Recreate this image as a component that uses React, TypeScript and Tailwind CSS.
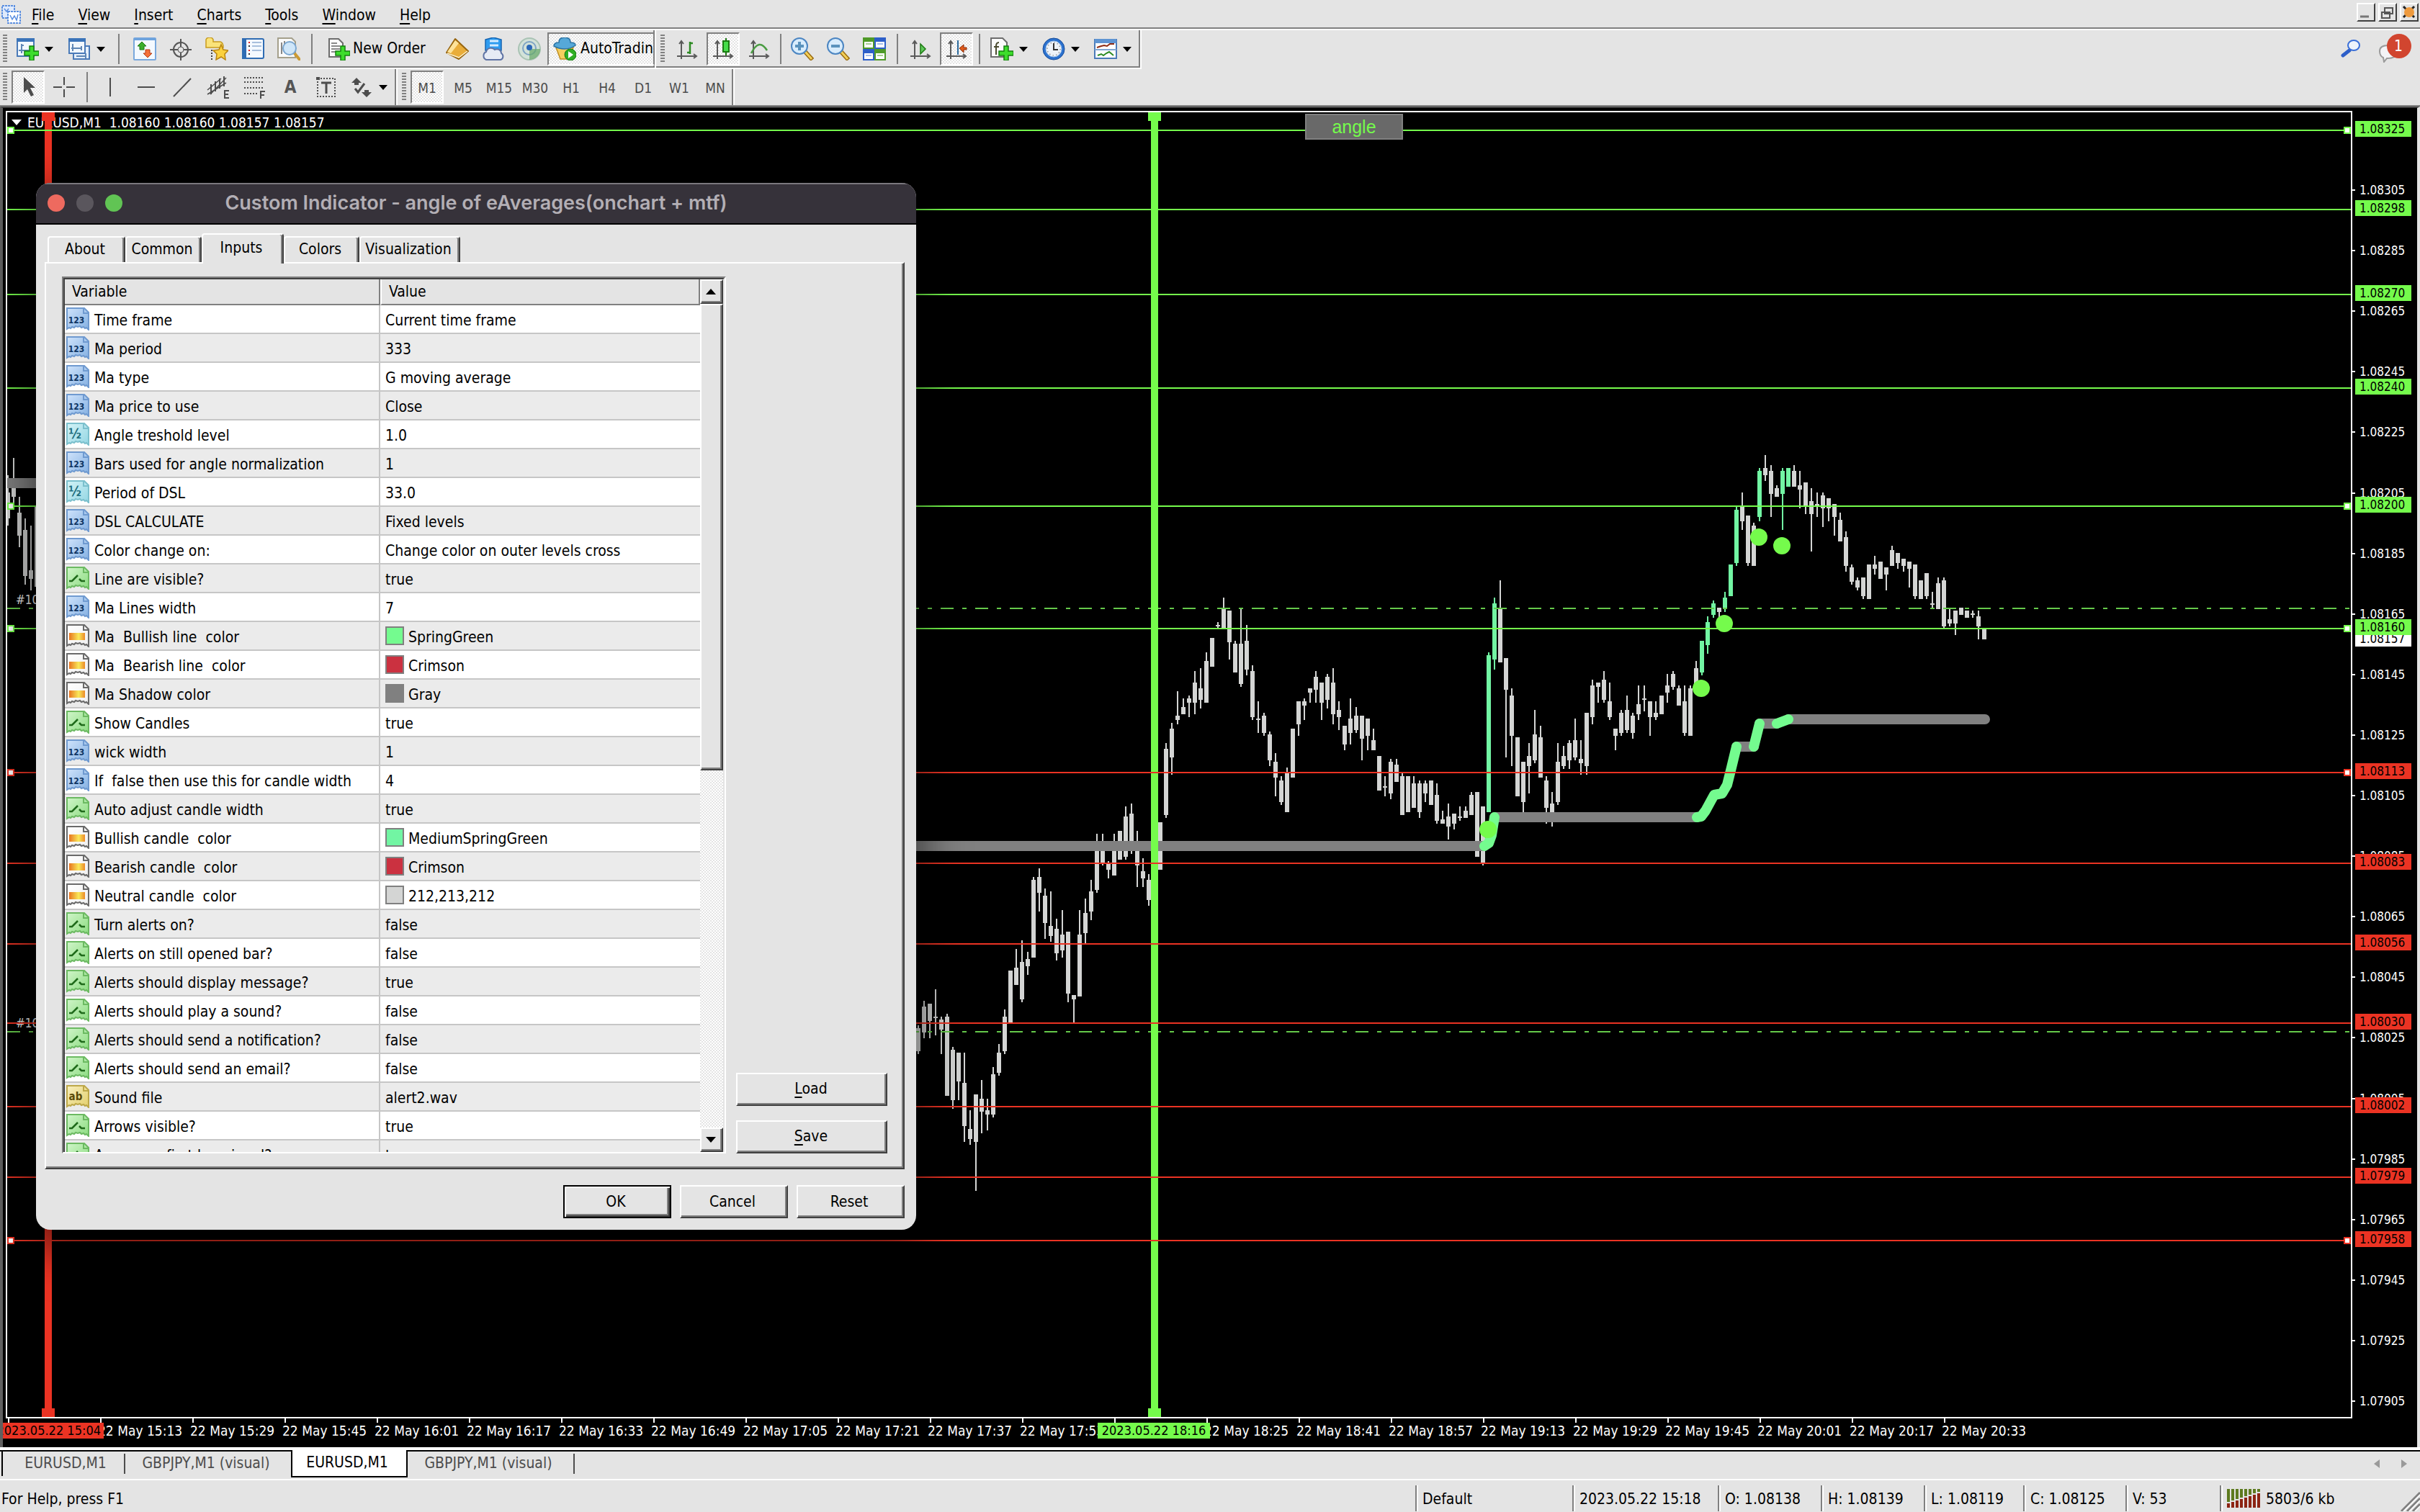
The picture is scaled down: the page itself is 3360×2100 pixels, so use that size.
import type { ReactNode } from "react";

/* ------------------------------------------------------------------ data */

type Kind = "int" | "num" | "bool" | "color" | "text";
type Input = { kind: Kind; name: string; value: string; swatch?: string };

const INPUTS: Input[] = [
  { kind: "int", name: "Time frame", value: "Current time frame" },
  { kind: "int", name: "Ma period", value: "333" },
  { kind: "int", name: "Ma type", value: "G moving average" },
  { kind: "int", name: "Ma price to use", value: "Close" },
  { kind: "num", name: "Angle treshold level", value: "1.0" },
  { kind: "int", name: "Bars used for angle normalization", value: "1" },
  { kind: "num", name: "Period of DSL", value: "33.0" },
  { kind: "int", name: "DSL CALCULATE", value: "Fixed levels" },
  { kind: "int", name: "Color change on:", value: "Change color on outer levels cross" },
  { kind: "bool", name: "Line are visible?", value: "true" },
  { kind: "int", name: "Ma Lines width", value: "7" },
  { kind: "color", name: "Ma  Bullish line  color", value: "SpringGreen", swatch: "bg-[#74fb8f]" },
  { kind: "color", name: "Ma  Bearish line  color", value: "Crimson", swatch: "bg-[#cb3140]" },
  { kind: "color", name: "Ma Shadow color", value: "Gray", swatch: "bg-[#808080]" },
  { kind: "bool", name: "Show Candles", value: "true" },
  { kind: "int", name: "wick width", value: "1" },
  { kind: "int", name: "If  false then use this for candle width", value: "4" },
  { kind: "bool", name: "Auto adjust candle width", value: "true" },
  { kind: "color", name: "Bullish candle  color", value: "MediumSpringGreen", swatch: "bg-[#72f5a3]" },
  { kind: "color", name: "Bearish candle  color", value: "Crimson", swatch: "bg-[#cb3140]" },
  { kind: "color", name: "Neutral candle  color", value: "212,213,212", swatch: "bg-[#d4d5d4]" },
  { kind: "bool", name: "Turn alerts on?", value: "false" },
  { kind: "bool", name: "Alerts on still opened bar?", value: "false" },
  { kind: "bool", name: "Alerts should display message?", value: "true" },
  { kind: "bool", name: "Alerts should play a sound?", value: "false" },
  { kind: "bool", name: "Alerts should send a notification?", value: "false" },
  { kind: "bool", name: "Alerts should send an email?", value: "false" },
  { kind: "text", name: "Sound file", value: "alert2.wav" },
  { kind: "bool", name: "Arrows visible?", value: "true" },
  { kind: "bool", name: "Arrows on first bar signal?", value: "true" },
];

/* Plot coordinates: x 10..3264, y 156..1968 */
const PLOT = { x: 10, y: 156, w: 3254, h: 1812 };

const LEVELS = [
  { p: "1.08325", y: 181, up: true, grip: true },
  { p: "1.08298", y: 291, up: true, grip: false },
  { p: "1.08270", y: 409, up: true, grip: false },
  { p: "1.08240", y: 539, up: true, grip: false },
  { p: "1.08200", y: 703, up: true, grip: true },
  { p: "1.08160", y: 873, up: true, grip: true },
  { p: "1.08113", y: 1073, up: false, grip: true },
  { p: "1.08083", y: 1199, up: false, grip: false },
  { p: "1.08056", y: 1311, up: false, grip: false },
  { p: "1.08030", y: 1421, up: false, grip: false },
  { p: "1.08002", y: 1537, up: false, grip: false },
  { p: "1.07979", y: 1635, up: false, grip: false },
  { p: "1.07958", y: 1723, up: false, grip: true },
];

const SCALE = Array.from({ length: 21 }, (_, i) => ({
  p: (1.08305 - i * 0.0002).toFixed(5),
  y: 264 + i * 84.1,
}));

const TIMES = Array.from({ length: 22 }, (_, i) => {
  const m = 14 * 60 + 57 + i * 16;
  return {
    x: 11 + i * 128,
    label: `22 May ${Math.floor(m / 60)}:${String(m % 60).padStart(2, "0")}`,
  };
});

/* high, body top, body bottom, low; one entry per 8px bar */
type Bar = [number, number, number, number];
const EARLY: Bar[] = [
  [660, 684, 720, 730], [636, 664, 690, 704], [690, 712, 744, 760],
  [720, 736, 800, 812], [730, 792, 804, 820], [702, 702, 815, 815],
];
const BARS: Bar[] = [
  [1424, 1428, 1460, 1464], [1390, 1398, 1434, 1442], [1394, 1394, 1418, 1442], [1374, 1412, 1414, 1438],
  [1412, 1416, 1430, 1464], [1408, 1412, 1522, 1522], [1454, 1458, 1528, 1540], [1462, 1462, 1502, 1528],
  [1462, 1504, 1564, 1586], [1542, 1568, 1582, 1590], [1520, 1520, 1586, 1654], [1500, 1526, 1544, 1574],
  [1526, 1542, 1548, 1570], [1482, 1492, 1548, 1552], [1450, 1462, 1490, 1494], [1402, 1412, 1460, 1464],
  [1348, 1348, 1420, 1420], [1318, 1344, 1368, 1368], [1306, 1336, 1388, 1392], [1322, 1332, 1342, 1354],
  [1218, 1222, 1330, 1330], [1206, 1218, 1240, 1266], [1234, 1244, 1282, 1304], [1238, 1286, 1300, 1308],
  [1276, 1290, 1324, 1334], [1264, 1298, 1320, 1330], [1294, 1294, 1380, 1392], [1382, 1382, 1388, 1420],
  [1264, 1298, 1384, 1384], [1248, 1268, 1296, 1310], [1222, 1238, 1266, 1278], [1158, 1176, 1236, 1240],
  [1158, 1176, 1198, 1202], [1196, 1200, 1208, 1220], [1158, 1168, 1216, 1216], [1154, 1154, 1194, 1194],
  [1120, 1134, 1190, 1194], [1116, 1130, 1172, 1186], [1154, 1176, 1202, 1232], [1192, 1210, 1220, 1232],
  [1214, 1222, 1250, 1258], [1190, 1200, 1230, 1240], [1142, 1142, 1208, 1208], [1032, 1040, 1132, 1136],
  [1004, 1012, 1052, 1076], [960, 994, 1000, 1006], [970, 982, 992, 992], [966, 970, 976, 996],
  [932, 948, 976, 992], [928, 956, 972, 984], [906, 918, 976, 976], [886, 886, 926, 926],
  [864, 868, 870, 872], [830, 844, 872, 872], [848, 848, 892, 916], [890, 894, 934, 934],
  [844, 894, 950, 954], [868, 890, 930, 938], [924, 932, 996, 1000], [974, 998, 1000, 1018],
  [990, 994, 1018, 1022], [1016, 1020, 1056, 1064], [1046, 1058, 1080, 1106], [1078, 1084, 1114, 1118],
  [1066, 1074, 1128, 1128], [1012, 1012, 1080, 1080], [974, 974, 1006, 1022], [970, 974, 980, 1000],
  [956, 956, 962, 976], [932, 940, 958, 976], [948, 948, 976, 1000], [936, 940, 972, 984],
  [928, 948, 992, 1006], [974, 986, 996, 1014], [1008, 1008, 1034, 1042], [970, 998, 1018, 1034],
  [982, 994, 1014, 1018], [994, 994, 1026, 1056], [998, 998, 1022, 1042], [1012, 1028, 1042, 1042],
  [1050, 1050, 1098, 1098], [1078, 1092, 1094, 1106], [1054, 1058, 1102, 1110], [1054, 1062, 1086, 1086],
  [1074, 1078, 1132, 1132], [1078, 1078, 1128, 1128], [1078, 1088, 1122, 1122], [1084, 1088, 1128, 1136],
  [1084, 1088, 1102, 1114], [1084, 1084, 1118, 1118], [1088, 1104, 1140, 1144], [1126, 1138, 1144, 1144],
  [1116, 1134, 1148, 1166], [1130, 1130, 1144, 1152], [1120, 1134, 1136, 1140], [1120, 1126, 1136, 1136],
  [1100, 1104, 1132, 1132], [1100, 1100, 1190, 1190], [1120, 1120, 1200, 1202], [906, 910, 1128, 1128],
  [830, 838, 916, 930], [806, 844, 920, 920], [914, 914, 958, 1052], [956, 966, 1022, 1064],
  [1024, 1024, 1106, 1106], [1058, 1058, 1114, 1128], [1032, 1050, 1064, 1102], [986, 1020, 1056, 1060],
  [1008, 1024, 1080, 1080], [1078, 1084, 1122, 1144], [1100, 1116, 1130, 1148], [1032, 1058, 1114, 1118],
  [1036, 1050, 1064, 1068], [1028, 1032, 1056, 1068], [998, 1028, 1052, 1056], [1028, 1054, 1060, 1076],
  [990, 990, 1064, 1076], [944, 952, 996, 1006], [948, 948, 954, 976], [932, 944, 972, 976],
  [948, 974, 996, 1000], [1012, 1012, 1022, 1042], [986, 990, 1018, 1022], [966, 986, 1014, 1018],
  [990, 994, 1018, 1026], [952, 978, 992, 1000], [952, 970, 972, 988], [974, 974, 996, 1022],
  [974, 990, 996, 1000], [966, 966, 992, 992], [936, 952, 962, 976], [932, 936, 954, 958],
  [952, 956, 980, 980], [952, 974, 1018, 1022], [952, 956, 1022, 1022], [918, 928, 956, 956],
  [890, 890, 934, 938], [856, 864, 896, 908], [834, 838, 854, 858], [844, 844, 850, 858],
  [822, 830, 846, 850], [784, 784, 828, 828], [704, 708, 782, 786], [684, 704, 724, 736],
  [716, 716, 782, 786], [726, 730, 786, 786], [650, 654, 718, 724], [632, 650, 660, 668],
  [646, 654, 686, 718], [674, 678, 690, 690], [650, 654, 686, 736], [650, 650, 676, 676],
  [646, 654, 676, 676], [654, 674, 680, 706], [670, 670, 704, 714], [678, 696, 714, 766],
  [684, 700, 702, 718], [684, 688, 706, 732], [692, 692, 706, 724], [700, 700, 718, 744],
  [712, 722, 752, 752], [738, 746, 786, 794], [784, 788, 808, 812], [802, 806, 816, 820],
  [802, 802, 828, 832], [784, 784, 832, 832], [772, 784, 790, 798], [780, 780, 804, 804],
  [788, 788, 798, 820], [758, 764, 786, 786], [768, 768, 782, 790], [776, 776, 786, 794],
  [780, 780, 790, 816], [784, 784, 828, 832], [806, 806, 832, 832], [796, 796, 828, 832],
  [822, 838, 840, 846], [802, 810, 846, 846], [802, 806, 870, 872], [844, 860, 866, 870],
  [848, 848, 866, 882], [844, 844, 854, 854], [848, 848, 858, 858], [848, 852, 854, 858],
  [848, 856, 870, 888], [872, 872, 888, 888],
];
const FIRST_X = 1275;
const GREEN_X = [2067, 2075, 2363, 2371, 2379, 2395, 2403, 2411, 2443, 2475, 2483];
const SIGNALS: [number, number][] = [[2066, 1152], [2362, 956], [2394, 866], [2442, 746], [2474, 758]];

/* ----------------------------------------------------------------- icons */

function Svg({ children }: { children: ReactNode }) {
  return (
    <svg viewBox="0 0 32 32" className="size-8 shrink-0" aria-hidden="true">
      {children}
    </svg>
  );
}

const Plus = () => (
  <path d="M19 12h6v7h7v6h-7v7h-6v-7h-7v-6h7z" fill="#3ddc2c" stroke="#15800f" strokeWidth="1.5" />
);
const Axes = () => (
  <path d="M8 6v24M2 26h26M5 9l3-4 3 4M25 23l4 3-4 3" fill="none" stroke="#5a5a5a" strokeWidth="2" />
);

const NewChartIcon = () => (
  <Svg>
    <rect x="2" y="2" width="23" height="24" fill="#f2f8fe" stroke="#4a7ab8" strokeWidth="2" />
    <rect x="1" y="1" width="25" height="5" fill="#3b74b9" />
    <path d="M8 9v13M4 18h14M8 11h3" stroke="#5f87b5" strokeWidth="2" />
    <Plus />
  </Svg>
);
const ProfilesIcon = () => (
  <Svg>
    <rect x="8" y="12" width="22" height="18" fill="#e5effa" stroke="#4a7ab8" strokeWidth="2" />
    <path d="M12 26h14M25 22v7" stroke="#5f87b5" strokeWidth="2" />
    <rect x="2" y="2" width="22" height="20" fill="#f2f8fe" stroke="#4a7ab8" strokeWidth="2" />
    <rect x="1" y="1" width="24" height="5" fill="#3b74b9" />
    <path d="M7 9v10M5 15h14M19 12v6" stroke="#5f87b5" strokeWidth="2" />
  </Svg>
);
const MarketIcon = () => (
  <Svg>
    <rect x="1" y="1" width="30" height="30" rx="1" fill="#f4f9ff" stroke="#79a8dd" strokeWidth="2" />
    <rect x="1" y="1" width="30" height="3" fill="#6ea3de" />
    <path d="M12 6l6 6h-3v5H9v-5H6z" fill="#3cae2c" stroke="#1c7a12" />
    <path d="M20 28l-6-6h3v-5h6v5h3z" fill="#f4713a" stroke="#b73b12" />
  </Svg>
);
const TargetIcon = () => (
  <Svg>
    <g fill="none" stroke="#555" strokeWidth="2">
      <circle cx="16" cy="17" r="10" />
      <circle cx="16" cy="17" r="4" strokeWidth="1" />
      <path d="M16 2v11M16 21v11M1 17h11M20 17h11" />
    </g>
  </Svg>
);
const NavigatorIcon = () => (
  <Svg>
    <path d="M1 14V3q1-3 5-3t5 3v3h10q4 1 4 8z" fill="#fae37a" stroke="#c79b1e" strokeWidth="1.5" />
    <path d="M9 17v15" stroke="#444" strokeWidth="2" strokeDasharray="2 2" />
    <path d="M22 10l3 7 7 1-5 5 1 8-6-4-7 4 1-8-5-5 8-1z" fill="#fbd13d" stroke="#b98410" strokeWidth="1.5" />
  </Svg>
);
const DataIcon = () => (
  <Svg>
    <rect x="2" y="2" width="29" height="27" rx="2" fill="#f4f9ff" stroke="#2f6cb3" strokeWidth="2" />
    <rect x="1" y="1" width="6" height="29" fill="#2f6cb3" />
    <path d="M10 7h2M10 18h2" stroke="#e02020" strokeWidth="2" />
    <path d="M10 12h2M10 23h2" stroke="#333" strokeWidth="2" />
    <path d="M15 7h13M15 12h13M15 18h13" stroke="#a8bfdc" strokeWidth="2" />
  </Svg>
);
const TesterIcon = () => (
  <Svg>
    <path d="M1 1h19l5 5v22H1z" fill="#fafafa" stroke="#a5a08c" strokeWidth="2" />
    <path d="M6 7v16M10 5v8" stroke="#888" strokeWidth="2" />
    <path d="M23 21l9 11" stroke="#cc9a33" strokeWidth="4" />
    <circle cx="17" cy="15" r="9" fill="#cfe6f9" stroke="#7aa6d0" strokeWidth="2" />
  </Svg>
);
const OrderIcon = () => (
  <Svg>
    <path d="M3 2h13l6 6v19H3z" fill="#fbfbfb" stroke="#6d6d6d" strokeWidth="2" />
    <path d="M6 8h8M6 12h12M6 16h12M6 20h6" stroke="#8a8a8a" strokeWidth="2" />
    <Plus />
  </Svg>
);
const BookIcon = () => (
  <Svg>
    <path d="M13 2l18 17-13 11L1 21z" fill="#e9ad3a" stroke="#97650f" strokeWidth="2" strokeLinejoin="round" />
    <path d="M13 4L2 20l5 2L18 8z" fill="#fde39a" />
    <path d="M2 22l16 6 12-9" fill="none" stroke="#fff3cf" strokeWidth="1.5" />
  </Svg>
);
const CloudIcon = () => (
  <Svg>
    <path d="M5 3l11-3 11 3v15H5z" fill="#2f9cf0" stroke="#1463b0" strokeWidth="1.5" />
    <path d="M11 5h12M11 11h12" stroke="#d5ecff" strokeWidth="3" />
    <path d="M6 31a6 6 0 010-11 7 7 0 0112-3 6 6 0 019 5 5 5 0 01-1 9z" fill="#e6ebf5" stroke="#5f73a4" strokeWidth="2" />
  </Svg>
);
const SignalIcon = () => (
  <Svg>
    <circle cx="16" cy="16" r="15" fill="#d3e2d9" stroke="#a9c3b4" strokeWidth="2" />
    <circle cx="16" cy="15" r="9" fill="none" stroke="#7ea4c4" strokeWidth="2" />
    <path d="M16 16h15a15 15 0 01-15 15z" fill="#66a866" opacity=".7" />
    <circle cx="16" cy="14" r="4" fill="#2a68b8" />
  </Svg>
);
const AutoIcon = () => (
  <Svg>
    <path d="M4 14l6 16h12l6-16z" fill="#f6cf5f" stroke="#c18f22" strokeWidth="1.5" />
    <path d="M1 12q0-5 7-5 0-7 8-7t8 7q7 0 7 4-7 5-15 5T1 12z" fill="#56a8d8" stroke="#2a72a3" strokeWidth="1.5" />
    <circle cx="24" cy="24" r="8" fill="#2fae24" stroke="#17790f" />
    <path d="M21 19l7 5-7 5z" fill="#fff" />
  </Svg>
);
const BarsIcon = () => (
  <Svg>
    <Axes />
    <path d="M20 6v17M20 8h4M16 21h4" stroke="#2c8a22" strokeWidth="2.5" />
  </Svg>
);
const CandlesIcon = () => (
  <Svg>
    <Axes />
    <path d="M20 1v24" stroke="#1c7a12" strokeWidth="2" />
    <rect x="16" y="5" width="8" height="15" fill="#46dd4a" stroke="#1c7a12" strokeWidth="2" />
  </Svg>
);
const LineIcon = () => (
  <Svg>
    <Axes />
    <path d="M5 22Q16 0 27 18" fill="none" stroke="#4a9c42" strokeWidth="2.5" />
  </Svg>
);
const ZoomIcon = ({ plus }: { plus?: boolean }) => (
  <Svg>
    <path d="M20 20l10 11" stroke="#9a6c12" strokeWidth="6" />
    <path d="M20 20l9 10" stroke="#f3cf57" strokeWidth="3" />
    <circle cx="12" cy="12" r="11" fill="#d8ecfc" stroke="#4c86c2" strokeWidth="2" />
    <path d={plus ? "M6 12h12M12 6v12" : "M6 12h12"} stroke="#5b93bd" strokeWidth="4" />
  </Svg>
);
const TileIcon = () => (
  <Svg>
    <path d="M0 0h16v16H0zM16 16h16v16H16z" fill="#4f9a28" />
    <path d="M16 0h16v16H16zM0 16h16v16H0z" fill="#2d5fc9" />
    <path d="M2 6h12v8H2zM18 6h12v8H18zM2 22h12v8H2zM18 22h12v8H18z" fill="#fff" />
    <path d="M4 9h8M20 25h8" stroke="#a9cf95" strokeWidth="2" />
    <path d="M20 9h8M4 25h8" stroke="#a7bfec" strokeWidth="2" />
  </Svg>
);
const ScrollIcon = () => (
  <Svg>
    <Axes />
    <path d="M16 9l7 7-7 7z" fill="#5fc85a" stroke="#1c7a12" strokeWidth="1.5" />
  </Svg>
);
const ShiftIcon = () => (
  <Svg>
    <Axes />
    <path d="M18 4v20" stroke="#2c6a9c" strokeWidth="2" />
    <path d="M20 15l6-5v4h4v3h-4v4z" fill="#e05a1a" stroke="#8a2b06" />
  </Svg>
);
const IndicatorIcon = () => (
  <Svg>
    <path d="M1 1h16l6 6v20H1z" fill="#fbfbfb" stroke="#6d6d6d" strokeWidth="2" />
    <path d="M12 7q-4 0-4 5v12M5 13h7" fill="none" stroke="#4b4b30" strokeWidth="2" />
    <Plus />
  </Svg>
);
const ClockIcon = () => (
  <Svg>
    <circle cx="16" cy="16" r="15" fill="#2c72cf" stroke="#164b98" />
    <circle cx="16" cy="16" r="11" fill="#eef3f9" stroke="#9bbfe8" />
    <path d="M16 8v9h6" fill="none" stroke="#333" strokeWidth="2" />
    <circle cx="16" cy="16" r="9" fill="none" stroke="#999" strokeWidth="1.5" strokeDasharray="1.5 3.2" />
  </Svg>
);
const TemplateIcon = () => (
  <Svg>
    <rect x="1" y="3" width="30" height="26" fill="#fff" stroke="#4a7ab8" strokeWidth="2" />
    <rect x="1" y="2" width="30" height="6" fill="#5e94d2" />
    <path d="M1 17h30" stroke="#7fa6d3" strokeWidth="2" />
    <path d="M4 14l6-2 4-1 4 1 4-3h6" fill="none" stroke="#8c2a12" strokeWidth="2" />
    <path d="M5 25l5-2 3 2 4-3 4-2 6 5" fill="none" stroke="#2c8a22" strokeWidth="2" />
  </Svg>
);

const CursorIcon = () => (
  <Svg>
    <path d="M10 2v22l5-5 5 10 4-2-5-10h7z" fill="#4d4d4d" />
  </Svg>
);
const CrossIcon = () => (
  <Svg>
    <path d="M16 2v11M16 19v11M1 16h12M19 16h12" stroke="#4d4d4d" strokeWidth="2" />
  </Svg>
);
const VLineIcon = () => (
  <Svg>
    <path d="M16 3v26" stroke="#4d4d4d" strokeWidth="2" />
  </Svg>
);
const HLineIcon = () => (
  <Svg>
    <path d="M4 16h24" stroke="#4d4d4d" strokeWidth="2" />
  </Svg>
);
const TrendIcon = () => (
  <Svg>
    <path d="M4 29L28 4" stroke="#4d4d4d" strokeWidth="2" />
  </Svg>
);
const ChannelIcon = () => (
  <Svg>
    <path d="M1 20L20 4M5 26L27 3M1 26L27 10" stroke="#4d4d4d" strokeWidth="1.5" />
    <path d="M6 12v14M12 8v14M18 4v14M24 1v14" stroke="#4d4d4d" strokeWidth="2" />
    <path d="M31 21h-6v10h6M25 26h5" fill="none" stroke="#4d4d4d" strokeWidth="2" />
  </Svg>
);
const FiboIcon = () => (
  <Svg>
    <path d="M2 3h28M2 9h28M2 17h28M2 25h20" stroke="#4d4d4d" strokeWidth="2" strokeDasharray="2 2" />
    <path d="M31 22h-6v10M25 27h5" fill="none" stroke="#4d4d4d" strokeWidth="2" />
  </Svg>
);
const LabelIcon = () => (
  <Svg>
    <rect x="4" y="4" width="24" height="25" fill="none" stroke="#4d4d4d" strokeWidth="2" strokeDasharray="2 2" />
    <path d="M2 2h5v4H2z" fill="#4d4d4d" />
    <path d="M9 10h14M16 10v15" stroke="#4d4d4d" strokeWidth="3" />
  </Svg>
);
const ArrowsIcon = () => (
  <Svg>
    <path d="M9 3l7 7H12v3H6v-3H2zM23 30l-7-7h4v-3h6v3h4z" fill="#4d4d4d" />
    <path d="M7 18l4 5 9-12" fill="none" stroke="#4d4d4d" strokeWidth="3" />
  </Svg>
);

const KIND_STYLE: Record<Kind, { from: string; to: string; edge: string; ink: string }> = {
  int: { from: "#cfe3fb", to: "#84b0e2", edge: "#6f9ad0", ink: "#0f3563" },
  num: { from: "#d3f3f7", to: "#93d6e3", edge: "#7cc0cd", ink: "#1d6d7d" },
  bool: { from: "#d0f5c9", to: "#8bdc80", edge: "#6cba62", ink: "#1f6a1a" },
  color: { from: "#ffffff", to: "#efefef", edge: "#6a6a6a", ink: "#333333" },
  text: { from: "#f7eebd", to: "#e3cf6c", edge: "#bda849", ink: "#5b4a08" },
};

function KindIcon({ kind }: { kind: Kind }) {
  const s = KIND_STYLE[kind];
  return (
    <Svg>
      <path
        d="M1 1h24l6 6v24l-3-3-2 1-2-2-3 1-2-2-3 1-3-1-2 2-3-1-2 2-2-1-3 2z"
        fill={`url(#kind-${kind})`}
        stroke={s.edge}
        strokeWidth="2"
      />
      <path d="M24 1v7h7" fill="none" stroke={s.edge} strokeWidth="2" />
      {kind === "int" && (
        <text x="14" y="22" textAnchor="middle" fontSize="12" fontWeight="700" fontFamily="DejaVu Sans Condensed" fill={s.ink}>
          123
        </text>
      )}
      {kind === "num" && (
        <text x="12" y="22" textAnchor="middle" fontSize="19" fontWeight="700" fontFamily="DejaVu Sans Condensed" fill={s.ink}>
          ½
        </text>
      )}
      {kind === "text" && (
        <text x="13" y="21" textAnchor="middle" fontSize="15" fontWeight="700" fontFamily="DejaVu Sans Condensed" fill={s.ink}>
          ab
        </text>
      )}
      {kind === "bool" && <path d="M4 20h4l8-8M18 17l3 3h5" fill="none" stroke={s.ink} strokeWidth="2.5" />}
      {kind === "color" && <rect x="4" y="12" width="22" height="10" fill="url(#kind-bar)" />}
    </Svg>
  );
}

function IconDefs() {
  return (
    <svg className="absolute size-0" aria-hidden="true">
      <defs>
        {(Object.keys(KIND_STYLE) as Kind[]).map((k) => (
          <linearGradient key={k} id={`kind-${k}`} x1="0" y1="0" x2="1" y2="1">
            <stop offset="0" stopColor={KIND_STYLE[k].from} />
            <stop offset="1" stopColor={KIND_STYLE[k].to} />
          </linearGradient>
        ))}
        <linearGradient id="kind-bar">
          <stop offset="0" stopColor="#e8741f" />
          <stop offset=".6" stopColor="#f9e95a" />
          <stop offset="1" stopColor="#ec8a28" />
        </linearGradient>
      </defs>
    </svg>
  );
}

/* -------------------------------------------------------------- menu bar */

const WINBTN =
  "flex size-[26px] items-center justify-center border-2 border-t-white border-l-white border-r-[#404040] border-b-[#404040]";

function MenuBar() {
  const items = [
    ["F", "ile"], ["V", "iew"], ["I", "nsert"], ["C", "harts"], ["T", "ools"], ["W", "indow"], ["H", "elp"],
  ];
  return (
    <header className="flex h-[42px] items-center border-b-2 border-white pl-0.5 shadow-[inset_0_-2px_0_#808080]">
      <svg viewBox="0 0 28 28" className="size-7 shrink-0" aria-hidden="true">
        <path d="M1 2h17v17H1z" fill="#dfeafc" stroke="#5b8fe0" strokeWidth="2" strokeDasharray="3 1" />
        <path d="M9 10h17v16H9z" fill="#fff" stroke="#5b8fe0" strokeWidth="2" strokeDasharray="3 1" />
        <path d="M12 15l3 6 3-5 3 6 2-8M4 6l3 4 3-4" fill="none" stroke="#5b8fe0" strokeWidth="1.5" />
      </svg>
      <nav className="flex h-full flex-1 items-center gap-[33px] pt-1 pl-3.5 text-[21px]">
        {items.map(([m, rest]) => (
          <button key={rest} type="button">
            <u className="underline-offset-4">{m}</u>
            {rest}
          </button>
        ))}
      </nav>
      <div className="flex items-start gap-1 self-start pt-1 pr-0.5">
        <button type="button" aria-label="Minimize" className={WINBTN}>
          <svg viewBox="0 0 22 22" className="size-[22px]"><path d="M3 17h12" stroke="#777" strokeWidth="3" /></svg>
        </button>
        <button type="button" aria-label="Restore" className={WINBTN}>
          <svg viewBox="0 0 22 22" className="size-[22px]">
            <path d="M7 5h11v8H7zM3 11h11v8H3z" fill="#e4e4e4" stroke="#555" strokeWidth="2" />
          </svg>
        </button>
        <button type="button" aria-label="Close" className={WINBTN}>
          <svg viewBox="0 0 22 22" className="size-[22px]">
            <path d="M3 3l15 15M18 3L3 18" stroke="#222" strokeWidth="3" />
            <circle cx="11" cy="11" r="7" fill="#ee9a3e" />
          </svg>
        </button>
      </div>
    </header>
  );
}

/* -------------------------------------------------------------- toolbars */

const Grip = () => (
  <span className="h-10 w-1.5 shrink-0 bg-[repeating-linear-gradient(#808080_0_2px,#e4e4e4_2px_4px)]" />
);
const Sep = ({ tight }: { tight?: boolean }) => (
  <span className={`${tight ? "mx-1" : "mx-1.5"} h-[42px] w-0.5 shrink-0 bg-[#808080]`} />
);
const Caret = () => (
  <svg viewBox="0 0 12 7" className="h-[7px] w-3 shrink-0" aria-hidden="true">
    <path d="M0 0h12L6 7z" fill="#000" />
  </svg>
);

const PRESSED =
  "border-2 border-t-[#808080] border-l-[#808080] border-r-white border-b-white bg-[repeating-conic-gradient(#ffffff_0%_25%,#e4e4e4_0%_50%)] bg-[size:4px_4px]";

function Tool({ label, on, children }: { label: string; on?: boolean; children: ReactNode }) {
  return (
    <button
      type="button"
      aria-label={label}
      aria-pressed={on}
      className={`mx-[2px] flex h-[46px] w-[46px] shrink-0 items-center justify-center ${on ? PRESSED : ""}`}
    >
      {children}
    </button>
  );
}
function Drop({ label, children }: { label: string; children: ReactNode }) {
  return (
    <button type="button" aria-label={label} className="flex h-11 w-[72px] shrink-0 items-center gap-2 pl-2">
      {children}
      <Caret />
    </button>
  );
}

function MainToolbar() {
  return (
    <div className="flex h-[54px] items-stretch">
      <div className="flex h-full items-center border-r-2 border-b-2 border-white pl-1 shadow-[inset_-2px_-2px_0_#808080]">
        <Grip />
        <span className="w-1 shrink-0" />
        <Drop label="New chart"><NewChartIcon /></Drop>
        <Drop label="Profiles"><ProfilesIcon /></Drop>
        <Sep />
        <span className="w-1 shrink-0" />
        <Tool label="Market Watch"><MarketIcon /></Tool>
        <Tool label="Crosshair"><TargetIcon /></Tool>
        <Tool label="Navigator"><NavigatorIcon /></Tool>
        <Tool label="Data Window"><DataIcon /></Tool>
        <Tool label="Strategy Tester"><TesterIcon /></Tool>
        <Sep />
        <button type="button" className="flex h-11 w-[170px] shrink-0 items-center gap-1 pl-3.5 text-[21px] whitespace-nowrap">
          <OrderIcon />
          New Order
        </button>
        <Tool label="MetaEditor"><BookIcon /></Tool>
        <Tool label="Virtual Hosting"><CloudIcon /></Tool>
        <Tool label="Signals"><SignalIcon /></Tool>
        <button
          type="button"
          className="flex h-[46px] w-[149px] shrink-0 items-center gap-1.5 overflow-hidden border-2 border-t-[#808080] border-r-[#808080] border-b-white border-l-[#808080] bg-[repeating-conic-gradient(#ffffff_0%_25%,#e4e4e4_0%_50%)] bg-[size:4px_4px] pl-1.5 text-[21px]"
        >
          <AutoIcon />
          AutoTrading
        </button>
      </div>
      <div className="flex h-full items-center border-r-2 border-b-2 border-white pl-1.5 shadow-[inset_-2px_-2px_0_#808080]">
        <Grip />
        <span className="w-1.5 shrink-0" />
        <Tool label="Bar chart"><BarsIcon /></Tool>
        <Tool label="Candlesticks" on><CandlesIcon /></Tool>
        <Tool label="Line chart"><LineIcon /></Tool>
        <Sep tight />
        <Tool label="Zoom in"><ZoomIcon plus /></Tool>
        <Tool label="Zoom out"><ZoomIcon /></Tool>
        <Tool label="Tile windows"><TileIcon /></Tool>
        <Sep />
        <Tool label="Auto scroll"><ScrollIcon /></Tool>
        <Tool label="Chart shift" on><ShiftIcon /></Tool>
        <Sep />
        <Drop label="Indicators"><IndicatorIcon /></Drop>
        <Drop label="Periods"><ClockIcon /></Drop>
        <Drop label="Templates"><TemplateIcon /></Drop>
      </div>
      <div className="flex flex-1 items-center justify-end gap-6 pr-3 pb-1">
        <button type="button" aria-label="Search">
          <svg viewBox="0 0 28 28" className="size-7" aria-hidden="true">
            <path d="M3 24l9-7" stroke="#2d5fc9" strokeWidth="5" strokeLinecap="round" />
            <ellipse cx="18" cy="10" rx="8" ry="7" fill="#eef3fb" stroke="#3a6fd8" strokeWidth="2" />
          </svg>
        </button>
        <button type="button" aria-label="Messages" className="relative h-10 w-[46px]">
          <svg viewBox="0 0 46 40" className="h-10 w-[46px]" aria-hidden="true">
            <path d="M2 24q0-8 12-8t12 9-14 9l-4 5-1-6q-5-2-5-9z" fill="#f3f3f6" stroke="#9a9a9a" strokeWidth="2" />
            <circle cx="29" cy="17" r="17" fill="#d1452f" />
          </svg>
          <span className="absolute top-1 right-3 text-[21px] leading-[26px] text-white">1</span>
        </button>
      </div>
    </div>
  );
}

function DrawingToolbar() {
  const frames = ["M1", "M5", "M15", "M30", "H1", "H4", "D1", "W1", "MN"];
  return (
    <div className="flex h-[52px] items-stretch border-b-2 border-[#808080]">
      <div className="flex h-full items-center border-r-2 border-white pl-1 shadow-[inset_-2px_0_0_#808080]">
        <Grip />
        <span className="w-1 shrink-0" />
        <Tool label="Cursor" on><CursorIcon /></Tool>
        <Tool label="Crosshair"><CrossIcon /></Tool>
        <Sep />
        <Tool label="Vertical line"><VLineIcon /></Tool>
        <Tool label="Horizontal line"><HLineIcon /></Tool>
        <Tool label="Trendline"><TrendIcon /></Tool>
        <Tool label="Equidistant channel"><ChannelIcon /></Tool>
        <Tool label="Fibonacci"><FiboIcon /></Tool>
        <Tool label="Text"><span className="text-2xl font-bold text-[#555]">A</span></Tool>
        <Tool label="Text label"><LabelIcon /></Tool>
        <Drop label="Arrows"><ArrowsIcon /></Drop>
      </div>
      <div className="flex h-full items-center border-r-2 border-white pl-1.5 shadow-[inset_-2px_0_0_#808080]">
        <Grip />
        <span className="w-1 shrink-0" />
        {frames.map((f, i) => (
          <button
            key={f}
            type="button"
            aria-pressed={i === 0}
            className={`mx-[2px] flex h-[46px] w-[46px] shrink-0 items-center justify-center pt-0.5 text-[19px] text-[#4d4d4d] ${i === 0 ? PRESSED : ""}`}
          >
            {f}
          </button>
        ))}
      </div>
    </div>
  );
}

/* ----------------------------------------------------------------- chart */

function Candle({ x, bar, green }: { x: number; bar: Bar; green?: boolean }) {
  const [h, t, b, l] = bar;
  return (
    <g fill={green ? "#72f5a3" : "#d4d5d4"}>
      <rect x={x - 1} y={h} width="2" height={l - h} />
      <rect x={x - 3} y={t} width="6" height={b - t} />
    </g>
  );
}

function Plot() {
  const right = PLOT.x + PLOT.w;
  return (
    <svg
      viewBox={`${PLOT.x} ${PLOT.y} ${PLOT.w} ${PLOT.h}`}
      preserveAspectRatio="none"
      className="relative block size-full"
      role="img"
      aria-label="EURUSD one minute candles"
    >
      <g shapeRendering="crispEdges">
        {EARLY.map((b, i) => <Candle key={i} x={11 + i * 8} bar={b} />)}
        {BARS.map((b, i) => {
          const x = FIRST_X + i * 8;
          return <Candle key={x} x={x} bar={b} green={GREEN_X.includes(x)} />;
        })}
        <g fill="none" stroke="#65c94a" strokeWidth="2" strokeDasharray="18 12 6 12">
          <path d={`M10 845H${right}`} />
          <path d={`M10 1433H${right}`} />
        </g>
      </g>
      <g fill="none" strokeWidth="14" strokeLinecap="round" strokeLinejoin="round">
        <path d="M10 671H60M1200 1175H2060M2075 1135H2356M2411 1037H2435M2443 1005H2467M2483 999H2756" stroke="#808080" />
        <path
          d="M2061 1175L2067 1171 2071 1160 2075 1135M2356 1135L2362 1134 2368 1126 2380 1104 2391 1102 2398 1090 2404 1066 2411 1037M2435 1037L2443 1005M2467 1005L2483 999"
          stroke="#74fb8f"
        />
      </g>
      <g fill="#75fb4c" shapeRendering="crispEdges">
        <path d="M1598 156h10v1812h-10zM1594 156h18v12h-18zM1594 1956h18v12h-18z" />
        <path d="M62 156h10v1812h-10zM58 156h18v12h-4v4h-10v-4h-4zM58 1956h18v12h-18z" fill="#eb3323" />
      </g>
      {SIGNALS.map(([x, y]) => <circle key={x} cx={x} cy={y} r="12" fill="#75fb4c" />)}
      <g shapeRendering="crispEdges">
        {LEVELS.map(({ p, y, up, grip }) => (
          <g key={p} fill={up ? "#75fb4c" : "#eb3323"}>
            <rect x="10" y={y - 1} width={PLOT.w} height="2" />
            {grip &&
              [10, right - 10].map((x) => (
                <g key={x}>
                  <rect x={x} y={y - 5} width="10" height="10" />
                  <rect x={x + 2} y={y - 3} width="6" height="6" fill="#fff" />
                </g>
              ))}
          </g>
        ))}
      </g>
    </svg>
  );
}

const AXIS_TOP = 150;
const AXIS_H = 1820;
const pct = (y: number) => `${((y - AXIS_TOP) / AXIS_H) * 100}%`;
const plotX = (x: number) => `${((x - PLOT.x) / PLOT.w) * 100}%`;
const plotY = (y: number) => `${((y - PLOT.y) / PLOT.h) * 100}%`;
const timeX = (x: number) => `${((x - 4) / 3352) * 100}%`;

function PriceAxis() {
  return (
    <div className="relative text-[17px] leading-[22px] text-white">
      {SCALE.map(({ p, y }) => (
        <div key={p} style={{ top: pct(y) }} className="absolute flex -translate-y-1/2 items-center">
          <span className="h-0.5 w-1 bg-white" />
          <span className="pl-1.5">{p}</span>
        </div>
      ))}
      <div style={{ top: pct(887) }} className="absolute left-1 w-[78px] -translate-y-1/2 bg-white pl-1.5 text-black">
        1.08157
      </div>
      {LEVELS.map(({ p, y, up }) => (
        <div
          key={p}
          style={{ top: pct(y - 2) }}
          className={`absolute left-1 w-[78px] -translate-y-1/2 pl-1.5 text-black ${up ? "bg-[#75fb4c]" : "bg-[#eb3323]"}`}
        >
          {p}
        </div>
      ))}
    </div>
  );
}

function TimeAxis() {
  return (
    <div className="relative overflow-hidden text-[19px] leading-[22px] whitespace-nowrap text-white">
      {TIMES.map(({ x, label }) => (
        <div key={label} style={{ left: timeX(x) }} className="absolute top-0">
          <span className="block h-1.5 w-0.5 bg-white" />
          <span className="-ml-[3px] block">{label}</span>
        </div>
      ))}
      <div className="absolute top-1.5 left-0 flex w-[140px] justify-end overflow-hidden bg-[#eb3323] pr-1 text-[18px] text-black">
        2023.05.22 15:04
      </div>
      <div
        style={{ left: timeX(1524) }}
        className="absolute top-1.5 flex w-[156px] justify-center bg-[#75fb4c] text-[18px] text-black"
      >
        2023.05.22 18:16
      </div>
    </div>
  );
}

function Chart() {
  return (
    <main className="relative min-h-0 flex-1 border-t-2 border-r-4 border-l-4 border-t-[#404040] border-r-[#e4e4e4] border-l-[#606060] bg-black">
      <div className="grid h-full grid-cols-[minmax(0,1fr)_90px] grid-rows-[minmax(0,1fr)_40px]">
        <div className="min-h-0 pt-1 pl-1">
          <div className="relative h-full border-2 border-white">
            <div className="absolute top-1 left-1.5 flex items-center gap-2 text-[19px] leading-5 whitespace-pre text-white">
              <svg viewBox="0 0 14 8" className="h-2 w-3.5" aria-hidden="true"><path d="M0 0h14L7 8z" fill="#fff" /></svg>
              EURUSD,M1  1.08160 1.08160 1.08157 1.08157
            </div>
            {[834, 1422].map((y) => (
              <span key={y} style={{ top: plotY(y) }} className="absolute left-3 -translate-y-1/2 text-[17px] text-[#f0f0f0]">
                #10
              </span>
            ))}
            <Plot />
            <button
              type="button"
              style={{ left: plotX(1812) }}
              className="absolute top-0.5 h-9 w-[136px] border-2 border-[#808080] bg-[#696969] font-['Liberation_Sans'] text-[25px] leading-8 text-[#75fb4c]"
            >
              angle
            </button>
          </div>
        </div>
        <PriceAxis />
        <div className="col-span-2 grid">
          <TimeAxis />
        </div>
      </div>
      <IndicatorDialog />
    </main>
  );
}

/* ---------------------------------------------------------------- dialog */

const RAISED =
  "border-2 border-t-white border-l-white border-r-[#404040] border-b-[#404040] shadow-[inset_-2px_-2px_0_#808080]";

function DialogTab({ label, width, active }: { label: string; width: string; active?: boolean }) {
  return (
    <button
      type="button"
      role="tab"
      aria-selected={active ?? false}
      className={`${width} ${active ? "z-10 h-[42px] -mb-0.5 pb-0.5" : "h-9"} rounded-t border-2 border-b-0 border-t-white border-r-[#404040] border-l-white bg-[#e4e4e4] pr-1 shadow-[inset_-2px_0_0_#808080]`}
    >
      {label}
    </button>
  );
}

function ScrollArrow({ up }: { up?: boolean }) {
  return (
    <button
      type="button"
      aria-label={up ? "Scroll up" : "Scroll down"}
      className={`${RAISED} flex h-[34px] shrink-0 items-center justify-center bg-[#e4e4e4] pr-0.5`}
    >
      <svg viewBox="0 0 14 8" className="h-2 w-3.5" aria-hidden="true">
        <path d={up ? "M0 8h14L7 0z" : "M0 0h14L7 8z"} fill="#000" />
      </svg>
    </button>
  );
}

function InputsTable() {
  return (
    <div className="flex w-[922px] shrink-0 border-2 border-t-[#808080] border-r-white border-b-white border-l-[#808080]">
      <div className="flex min-w-0 flex-1 border-t-2 border-r-2 border-l-2 border-t-[#404040] border-r-[#e4e4e4] border-l-[#404040]">
        <div className="h-full min-w-0 flex-1 overflow-hidden bg-white">
          <table className="w-full table-fixed border-separate border-spacing-0 text-left">
            <thead>
              <tr className="h-[34px] bg-[#e4e4e4]">
                <th scope="col" className="w-[438px] border-r-2 border-b-2 border-[#808080] pt-0.5 pl-2.5 font-normal">Variable</th>
                <th scope="col" className="border-r-2 border-b-2 border-l-2 border-[#808080] border-l-white pt-0.5 pl-2.5 font-normal">Value</th>
              </tr>
            </thead>
            <tbody>
              {INPUTS.map(({ kind, name, value, swatch }, i) => (
                <tr key={name} className={`h-10 ${i % 2 ? "bg-[#ebebeb]" : "bg-white"}`}>
                  <td className="border-r-2 border-b-2 border-[#c6c6c6] p-0 pl-0.5">
                    <div className="flex h-[38px] items-center gap-[7px] overflow-hidden whitespace-pre">
                      <KindIcon kind={kind} />
                      <span className="pt-1.5">{name}</span>
                    </div>
                  </td>
                  <td className="border-b-2 border-[#c6c6c6] p-0 pl-[7px]">
                    <div className="flex h-[38px] items-center gap-1.5 whitespace-pre">
                      {swatch && <span className={`size-[26px] border-2 border-[#808080] ${swatch}`} />}
                      <span className="pt-1.5">{value}</span>
                    </div>
                  </td>
                </tr>
              ))}
            </tbody>
          </table>
        </div>
        <div className="flex w-8 shrink-0 flex-col bg-[repeating-conic-gradient(#ffffff_0%_25%,#e4e4e4_0%_50%)] bg-[size:4px_4px]">
          <ScrollArrow up />
          <div className={`${RAISED} h-[648px] bg-[#e4e4e4]`} />
          <span className="flex-1" />
          <ScrollArrow />
        </div>
      </div>
    </div>
  );
}

function IndicatorDialog() {
  return (
    <section
      role="dialog"
      aria-label="Custom Indicator"
      className="absolute top-[104px] left-[46px] z-20 flex h-[1454px] w-[1222px] flex-col overflow-hidden rounded-[20px] bg-[#e4e4e4] text-[21px] text-black shadow-[0_20px_60px_10px_rgba(0,0,0,0.55)]"
    >
      <div className="flex h-[58px] shrink-0 items-center border-t-2 border-b-2 border-t-[#7b787e] border-b-black bg-[#36323a] px-4 pb-0.5">
        <div className="flex w-[120px] gap-4">
          <button type="button" aria-label="Close" className="size-6 rounded-full bg-[#ee6a5f]" />
          <button type="button" aria-label="Minimize" className="size-6 rounded-full bg-[#5a565d]" />
          <button type="button" aria-label="Zoom" className="size-6 rounded-full bg-[#61c454]" />
        </div>
        <h2 className="flex-1 text-center font-['Inter'] text-[27px] leading-8 font-semibold text-[#b3afb5]">
          Custom Indicator - angle of eAverages(onchart + mtf)
        </h2>
        <span className="w-[120px]" />
      </div>

      <div className="flex min-h-0 flex-1 flex-col pt-3 pr-4 pb-4 pl-3">
        <div role="tablist" className="flex items-end pl-1">
          <DialogTab label="About" width="w-[108px]" />
          <DialogTab label="Common" width="w-[106px]" />
          <DialogTab label="Inputs" width="w-[114px]" active />
          <DialogTab label="Colors" width="w-[105px]" />
          <DialogTab label="Visualization" width="w-[140px]" />
        </div>
        <div className={`${RAISED} flex min-h-0 flex-1 px-[22px] pt-[18px] pb-5`}>
          <InputsTable />
          <div className="flex flex-1 flex-col items-end justify-end gap-5">
            <button type="button" className={`${RAISED} h-[46px] w-[210px] pr-0.5`}><u className="underline-offset-4">L</u>oad</button>
            <button type="button" className={`${RAISED} h-[46px] w-[210px] pr-0.5`}><u className="underline-offset-4">S</u>ave</button>
          </div>
        </div>
        <div className="flex justify-end gap-3 pt-[22px]">
          <button type="button" className="h-[46px] w-[150px] border-2 border-black pt-0.5 pr-1 shadow-[inset_2px_2px_0_#fff,inset_-2px_-2px_0_#404040,inset_-4px_-4px_0_#808080]">OK</button>
          <button type="button" className={`${RAISED} h-[46px] w-[150px] pt-0.5 pr-1`}>Cancel</button>
          <button type="button" className={`${RAISED} h-[46px] w-[150px] pt-0.5 pr-1`}>Reset</button>
        </div>
      </div>
    </section>
  );
}

/* ---------------------------------------------------------------- footer */

function ChartTabs() {
  const idle = "h-9 border-t-2 border-black text-[#4d4d4d]";
  return (
    <nav aria-label="Charts" className="flex h-[46px] items-start border-t-4 border-b-2 border-white text-[21px]">
      <span className="h-9 w-1 border-t-2 border-r-2 border-black" />
      <button type="button" className={`${idle} w-[168px] pl-1.5`}>EURUSD,M1</button>
      <span className="flex h-9 items-center border-t-2 border-black"><span className="h-7 w-0.5 bg-[#4d4d4d]" /></span>
      <button type="button" className={`${idle} w-[230px] pr-1.5`}>GBPJPY,M1 (visual)</button>
      <button type="button" aria-current="page" className="h-[38px] w-[162px] border-x-2 border-b-2 border-black bg-white pr-1.5">EURUSD,M1</button>
      <button type="button" className={`${idle} w-[230px] pr-1.5`}>GBPJPY,M1 (visual)</button>
      <span className="flex h-9 items-center border-t-2 border-black"><span className="h-7 w-0.5 bg-[#4d4d4d]" /></span>
      <div className="flex h-9 flex-1 items-center justify-end gap-[30px] border-t-2 border-black pr-[18px]">
        <button type="button" aria-label="Previous">
          <svg viewBox="0 0 8 12" className="h-3 w-2"><path d="M8 0v12L0 6z" fill="#9a9a9a" /></svg>
        </button>
        <button type="button" aria-label="Next">
          <svg viewBox="0 0 8 12" className="h-3 w-2"><path d="M0 0v12l8-6z" fill="#9a9a9a" /></svg>
        </button>
      </div>
    </nav>
  );
}

function StatusBar() {
  const cell = "flex h-9 shrink-0 items-center border-l-2 border-[#808080] pt-1 pl-2 shadow-[inset_2px_0_0_#fff]";
  return (
    <footer className="flex h-11 items-center pt-1.5 text-[21px] whitespace-nowrap">
      <span className="flex-1 pt-1 pl-0.5">For Help, press F1</span>
      <span className={`${cell} w-[218px]`}>Default</span>
      <span className={`${cell} w-[202px]`}>2023.05.22 15:18</span>
      <span className={`${cell} w-[143px]`}>O: 1.08138</span>
      <span className={`${cell} w-[143px]`}>H: 1.08139</span>
      <span className={`${cell} w-[138px]`}>L: 1.08119</span>
      <span className={`${cell} w-[142px]`}>C: 1.08125</span>
      <span className={`${cell} w-[131px]`}>V: 53</span>
      <span className={`${cell} w-[278px] justify-between`}>
        <span className="flex items-center gap-2">
          <svg viewBox="0 0 46 26" className="mb-1 h-[26px] w-[46px]" aria-hidden="true">
            {Array.from({ length: 8 }, (_, i) => (
              <g key={i}>
                <rect x={i * 6} y="0" width="4" height={18 - i * 2} fill="#5d7a1f" />
                <rect x={i * 6} y={20 - i * 2} width="4" height={6 + i * 2} fill="#8c2413" />
              </g>
            ))}
          </svg>
          5803/6 kb
        </span>
        <svg viewBox="0 0 28 28" className="size-7 self-end" aria-hidden="true">
          <path d="M2 28L28 2M10 28L28 10M18 28l10-10" stroke="#808080" strokeWidth="3" />
          <path d="M5 28L28 5M13 28l15-15M21 28l7-7" stroke="#fff" strokeWidth="1.5" />
        </svg>
      </span>
    </footer>
  );
}

export default function App() {
  return (
    <div className="flex h-screen flex-col overflow-hidden bg-[#e4e4e4] font-['DejaVu_Sans_Condensed','DejaVu_Sans',sans-serif] text-black">
      <IconDefs />
      <MenuBar />
      <MainToolbar />
      <DrawingToolbar />
      <Chart />
      <ChartTabs />
      <StatusBar />
    </div>
  );
}
